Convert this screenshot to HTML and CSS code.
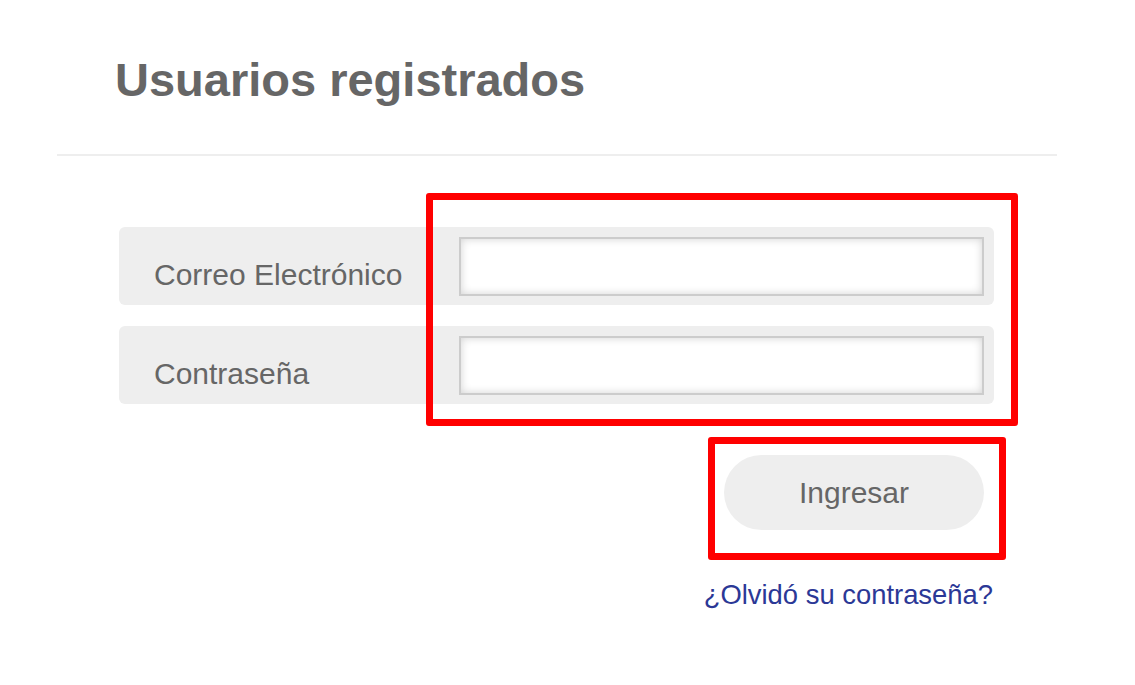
FILE: index.html
```html
<!DOCTYPE html>
<html lang="es">
<head>
<meta charset="utf-8">
<title>Usuarios registrados</title>
<link rel="stylesheet" href="styles.css">
</head>
<body>
<div class="page">
  <header class="header">
    <h1 class="title">Usuarios registrados</h1>
  </header>
  <form class="login-form">
    <div class="fields">
      <div class="field-row">
        <label class="field-label" for="email">Correo Electrónico</label>
        <input class="field-input" id="email" type="email">
      </div>
      <div class="field-row">
        <label class="field-label" for="pass">Contraseña</label>
        <input class="field-input" id="pass" type="password">
      </div>
    </div>
    <div class="actions">
      <button class="submit-btn" type="button">Ingresar</button>
      <a class="forgot-link" href="#">¿Olvidó su contraseña?</a>
    </div>
  </form>
  <div class="highlight highlight-fields"></div>
  <div class="highlight highlight-button"></div>
</div>
</body>
</html>
```

FILE: styles.css
```css
html, body {
  margin: 0;
  padding: 0;
  background: #ffffff;
}

body {
  font-family: "Liberation Sans", Arial, sans-serif;
  color: #666666;
}

.page {
  position: relative;
  width: 1000px;
  margin-left: 57px;
}

.header {
  padding: 53px 0 47px 58px;
  border-bottom: 2px solid #eeeeee;
}

.title {
  margin: 0;
  font-size: 47px;
  line-height: 54px;
  font-weight: bold;
  color: #666666;
}

.login-form {
  display: flex;
  flex-direction: column;
  width: 875px;
  margin: 71px 0 0 62px;
}

.fields {
  display: flex;
  flex-direction: column;
  gap: 21px;
}

.field-row {
  display: flex;
  align-items: flex-start;
  height: 78px;
  box-sizing: border-box;
  padding: 10px 10px 0 0;
  background: #eeeeee;
  border-radius: 6px;
}

.field-label {
  width: 305px;
  padding: 21px 0 0 35px;
  font-size: 30px;
  line-height: 34px;
  color: #666666;
}

.field-input {
  width: 525px;
  height: 59px;
  box-sizing: border-box;
  margin: 0;
  border: 2px solid #cccccc;
  background: #ffffff;
  box-shadow: inset 0 0 8px rgba(0, 0, 0, 0.18);
  outline: none;
  font: inherit;
}

.actions {
  display: flex;
  flex-direction: column;
  align-items: flex-end;
  padding-top: 51px;
}

.submit-btn {
  width: 260px;
  height: 75px;
  margin-right: 10px;
  border: none;
  border-radius: 38px;
  background: #eeeeee;
  color: #666666;
  font-family: "Liberation Sans", Arial, sans-serif;
  font-size: 30px;
  cursor: pointer;
}

.forgot-link {
  margin-top: 49px;
  margin-right: 1px;
  font-size: 27.4px;
  line-height: 31px;
  color: #2b3896;
  text-decoration: none;
}

.highlight {
  position: absolute;
  box-sizing: border-box;
  border: 7px solid #ff0000;
  border-radius: 3px;
  pointer-events: none;
}

.highlight-fields {
  left: 369px;
  top: 193px;
  width: 592px;
  height: 233px;
}

.highlight-button {
  left: 651px;
  top: 437px;
  width: 298px;
  height: 123px;
}
```
